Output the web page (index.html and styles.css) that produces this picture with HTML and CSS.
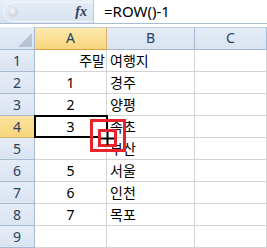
FILE: index.html
```html
<!DOCTYPE html>
<html lang="ko">

<head>
    <meta charset="UTF-8">
    <title>ROW 함수</title>
    <link rel="stylesheet" href="styles.css">
</head>

<body>
    <div class="formula-bar">
        <div class="name-area">
            <div class="name-pill"><span class="knob"></span><span class="fx">fx</span></div>
        </div>
        <div class="formula">=ROW()-1</div>
    </div>

    <div class="sheet">
        <div class="grid">
            <div class="corner"><span class="corner-tri"></span></div>
            <div class="col-head selected">A</div>
            <div class="col-head">B</div>
            <div class="col-head">C</div>

            <div class="row-head">1</div>
            <div class="cell right">주말</div>
            <div class="cell text">여행지</div>
            <div class="cell"></div>

            <div class="row-head">2</div>
            <div class="cell num">1</div>
            <div class="cell text">경주</div>
            <div class="cell"></div>

            <div class="row-head">3</div>
            <div class="cell num">2</div>
            <div class="cell text">양평</div>
            <div class="cell"></div>

            <div class="row-head selected">4</div>
            <div class="cell num">3</div>
            <div class="cell text">속초</div>
            <div class="cell"></div>

            <div class="row-head">5</div>
            <div class="cell num"></div>
            <div class="cell text">부산</div>
            <div class="cell"></div>

            <div class="row-head">6</div>
            <div class="cell num">5</div>
            <div class="cell text">서울</div>
            <div class="cell"></div>

            <div class="row-head">7</div>
            <div class="cell num">6</div>
            <div class="cell text">인천</div>
            <div class="cell"></div>

            <div class="row-head">8</div>
            <div class="cell num">7</div>
            <div class="cell text">목포</div>
            <div class="cell"></div>

            <div class="row-head">9</div>
            <div class="cell"></div>
            <div class="cell"></div>
            <div class="cell"></div>
        </div>

        <!-- active cell A4 and the fill handle cursor -->
        <div class="active-cell"></div>
        <div class="mark-outer"></div>
        <div class="mark-inner">
            <svg width="13" height="13" viewBox="0 0 13 13">
                <rect x="5.5" y="0" width="2" height="13" fill="#000" />
                <rect x="0" y="5.5" width="13" height="2" fill="#000" />
            </svg>
        </div>
    </div>
</body>

</html>
```

FILE: styles.css
```css
body {
    margin: 0;
    width: 267px;
    height: 248px;
    overflow: hidden;
    background-color: #fff;
    font-family: "Noto Sans", "Noto Sans CJK KR", sans-serif;
}

.formula-bar {
    display: flex;
    height: 23px;
    border-bottom: 1px solid #a9bcd4;
    margin-bottom: 3px;
}

.name-area {
    width: 94px;
    padding: 2px 0 1px 3px;
    box-sizing: border-box;
    background: linear-gradient(#e8eff8, #d6e2f0);
    border-right: 1px solid #bccbdd;
}

.name-pill {
    display: flex;
    align-items: center;
    justify-content: space-between;
    height: 100%;
    padding: 0 6px 0 4px;
    box-sizing: border-box;
    border: 1px solid #f4f8fc;
    border-right: none;
    border-radius: 10px 0 0 10px;
    background: linear-gradient(#e2eaf5, #d9e4f1);
}

.knob {
    width: 10px;
    height: 10px;
    border-radius: 50%;
    background: radial-gradient(circle at 40% 35%, #f4f6f8, #b9c1cb);
}

.fx {
    font-family: "Liberation Serif", serif;
    font-style: italic;
    font-weight: bold;
    font-size: 14px;
    color: #2f3e5c;
}

.formula {
    flex: 1;
    padding-left: 10px;
    font-size: 15px;
    line-height: 23px;
    color: #000;
}

.sheet {
    position: relative;
}

.grid {
    display: grid;
    grid-template-columns: 35px 72px 88px 1fr;
    grid-template-rows: 23px;
    grid-auto-rows: 22px;
}

.grid > div {
    box-sizing: border-box;
    border-right: 1px solid #d4d4d4;
    border-bottom: 1px solid #d4d4d4;
    font-size: 14px;
    line-height: 22px;
    white-space: nowrap;
    overflow: hidden;
}

.corner,
.col-head,
.row-head {
    background: linear-gradient(#e4ecf7, #dae4f1);
    color: #283f60;
    text-align: center;
}

.grid > .corner,
.grid > .col-head,
.grid > .row-head {
    border-right-color: #a6bad2;
    border-bottom-color: #a6bad2;
}

.corner {
    display: flex;
    align-items: flex-end;
    justify-content: flex-end;
    padding: 0 2px 2px 0;
}

.corner-tri {
    width: 14px;
    height: 14px;
    background-color: #b6c3d3;
    clip-path: polygon(100% 0, 100% 100%, 0 100%);
}

.col-head {
    box-shadow: inset 0 1px #c3d1e2;
    font-size: 15px;
}

.grid > .col-head.selected {
    background: linear-gradient(#fdeab0, #f8d57c);
    border-bottom-color: #e2a13b;
    border-right-color: #d8b46a;
}

.grid > .row-head.selected {
    background: linear-gradient(#fbe3a0, #f8d47c);
    border-right-color: #e2a13b;
    border-bottom-color: #d8b46a;
}

.num {
    text-align: center;
}

.text {
    padding-left: 3px;
}

.right {
    text-align: right;
    padding-right: 1px;
}

.active-cell {
    position: absolute;
    left: 34px;
    top: 88px;
    width: 70px;
    height: 19px;
    border: 2px solid #000;
}

.mark-outer {
    position: absolute;
    left: 90px;
    top: 92px;
    width: 30px;
    height: 27px;
    border: 3px solid #e8232e;
}

.mark-inner {
    position: absolute;
    left: 98px;
    top: 102px;
    width: 13px;
    height: 12px;
    border: 3px solid #e8232e;
    background-color: #fff;
    display: flex;
    align-items: center;
    justify-content: center;
}
```
